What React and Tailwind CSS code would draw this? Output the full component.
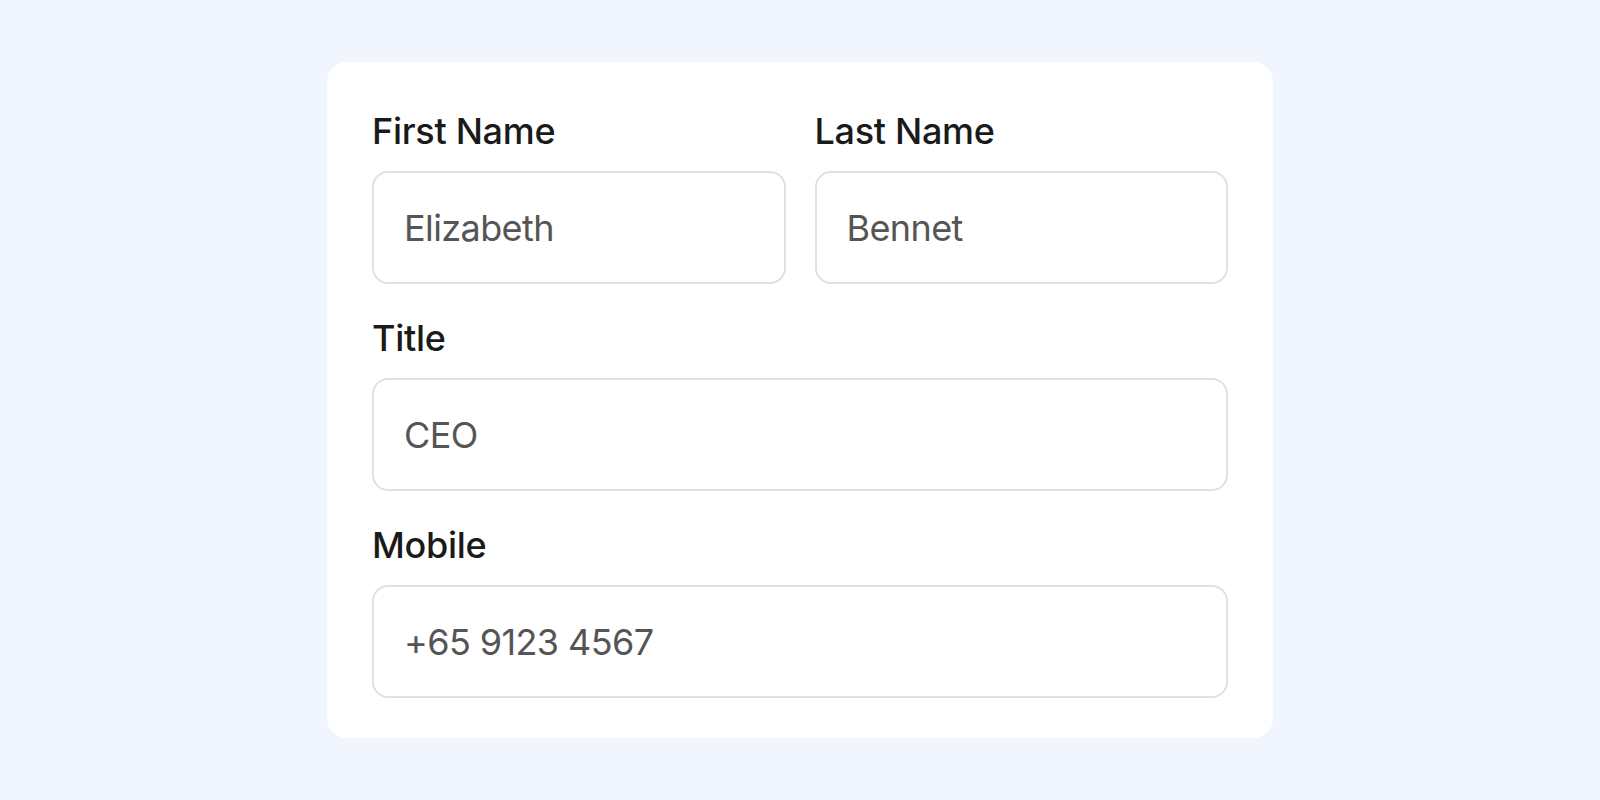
const Field = ({ label, value }) => (
  <label className="flex flex-col gap-[18px]">
    <span className="text-[36px] leading-[44px] font-medium tracking-[-0.3px] text-[#1a1a1a]">{label}</span>
    <input
      type="text"
      defaultValue={value}
      className="h-[113px] w-full rounded-[16px] border-2 border-[#e0e0e0] bg-white px-[30px] text-[36px] tracking-[-0.6px] text-[#555555] outline-none"
    />
  </label>
);

export default function App() {
  return (
    <div
      className="min-h-screen w-full flex items-center justify-center bg-[#f0f5fe]"
      style={{ fontFamily: 'Inter, "Noto Sans", sans-serif' }}
    >
      <form className="w-[946px] rounded-[20px] bg-white px-[45px] pt-[47px] pb-[40px] flex flex-col gap-[32px]">
        <div className="grid grid-cols-2 gap-[29px]">
          <Field label="First Name" value="Elizabeth" />
          <Field label="Last Name" value="Bennet" />
        </div>
        <Field label="Title" value="CEO" />
        <Field label="Mobile" value="+65 9123 4567" />
      </form>
    </div>
  );
}
